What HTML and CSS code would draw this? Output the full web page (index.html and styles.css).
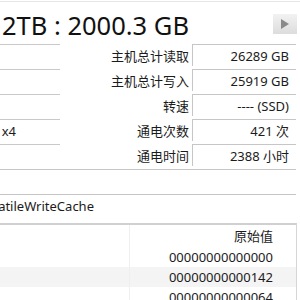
FILE: index.html
```html
<!DOCTYPE html>
<html>
<head>
<meta charset="utf-8">
<link rel="stylesheet" href="styles.css">
</head>
<body>
<div class="window">
  <div class="header">
    <div class="title">2TB : 2000.3 GB</div>
    <div class="next-btn"><svg width="10" height="12" viewBox="0 0 10 12"><path d="M1 1 L9 6 L1 11 Z" fill="#8a8a8a"/></svg></div>
  </div>
  <div class="info">
    <div class="left-col">
      <div class="lbox"></div>
      <div class="lbox"></div>
      <div class="lbox"></div>
      <div class="lbox"><span>PCIe 4.0 x4 | PCIe 4.0 x4</span></div>
      <div class="lbox"></div>
    </div>
    <div class="right-col">
      <div class="row"><div class="label">主机总计读取</div><div class="value">26289 GB</div></div>
      <div class="row"><div class="label">主机总计写入</div><div class="value">25919 GB</div></div>
      <div class="row"><div class="label">转速</div><div class="value">---- (SSD)</div></div>
      <div class="row"><div class="label">通电次数</div><div class="value">421 次</div></div>
      <div class="row"><div class="label">通电时间</div><div class="value">2388 小时</div></div>
    </div>
  </div>
  <div class="feature-box"></div>
  <div class="feature-text"><span>S.M.A.R.T., TRIM, VolatileWriteCache</span></div>
  <div class="smart">
    <div class="srow head"><div class="c1"></div><div class="c2">原始值</div></div>
    <div class="srow"><div class="c1"></div><div class="c2">00000000000000</div></div>
    <div class="srow alt"><div class="c1"></div><div class="c2">00000000000142</div></div>
    <div class="srow"><div class="c1"></div><div class="c2">00000000000064</div></div>
  </div>
</div>
</body>
</html>
```

FILE: styles.css
```css
*, *::before, *::after {
  box-sizing: border-box;
}
html, body {
  margin: 0;
  padding: 0;
  background: #ffffff;
}
body {
  width: 300px;
  height: 300px;
  overflow: hidden;
  font-family: "Noto Sans", "Noto Sans CJK SC", sans-serif;
  font-size: 13px;
  color: #1b1b1b;
}
.window {
  margin-top: 1px;
  border-top: 1px solid #e6e6e6;
}
.header {
  display: flex;
  align-items: center;
  justify-content: space-between;
  height: 42px;
  padding: 0 3px 0 2px;
}
.title {
  font-size: 25.5px;
  line-height: 30px;
  padding-top: 4px;
  color: #111;
  white-space: nowrap;
}
.next-btn {
  width: 24px;
  height: 20px;
  display: flex;
  align-items: center;
  justify-content: center;
  background: linear-gradient(#f2f2f2, #dcdcdc);
  margin-top: 2px;
}
.info {
  display: flex;
}
.left-col {
  width: 60px;
  flex: none;
}
.lbox {
  height: 22px;
  margin-bottom: 3px;
  border-top: 1px solid #c9c9c9;
  display: flex;
  justify-content: flex-end;
  align-items: center;
  padding-right: 44px;
  white-space: nowrap;
}
.right-col {
  flex: 1;
  padding-right: 4px;
}
.row {
  display: flex;
  height: 22px;
  margin-bottom: 3px;
}
.label {
  flex: 1;
  text-align: right;
  padding-right: 3px;
  line-height: 24px;
  white-space: nowrap;
}
.value {
  width: 104px;
  flex: none;
  border-top: 1px solid #c6c6c6;
  border-left: 1px solid #c6c6c6;
  text-align: right;
  padding-right: 7px;
  line-height: 22px;
  white-space: nowrap;
}
.feature-box {
  height: 25px;
  margin-right: 4px;
  border-top: 1px solid #c6c6c6;
}
.feature-text {
  height: 22px;
  margin-right: 4px;
  border-top: 1px solid #c6c6c6;
  display: flex;
  justify-content: flex-end;
  align-items: center;
  padding-right: 202px;
  white-space: nowrap;
}
.smart {
  margin-top: 7px;
  margin-right: 3px;
  border-top: 2px solid #d0d0d0;
  border-right: 1px solid #d6d6d6;
}
.srow {
  display: grid;
  grid-template-columns: 130px 1fr;
  height: 20px;
  line-height: 20px;
}
.srow.head {
  height: 22px;
  line-height: 22px;
}
.srow.alt {
  background: #f4f4f4;
}
.c1 {
  border-right: 1px solid #efefef;
}
.c2 {
  text-align: right;
  padding-right: 23px;
  white-space: nowrap;
}
```
